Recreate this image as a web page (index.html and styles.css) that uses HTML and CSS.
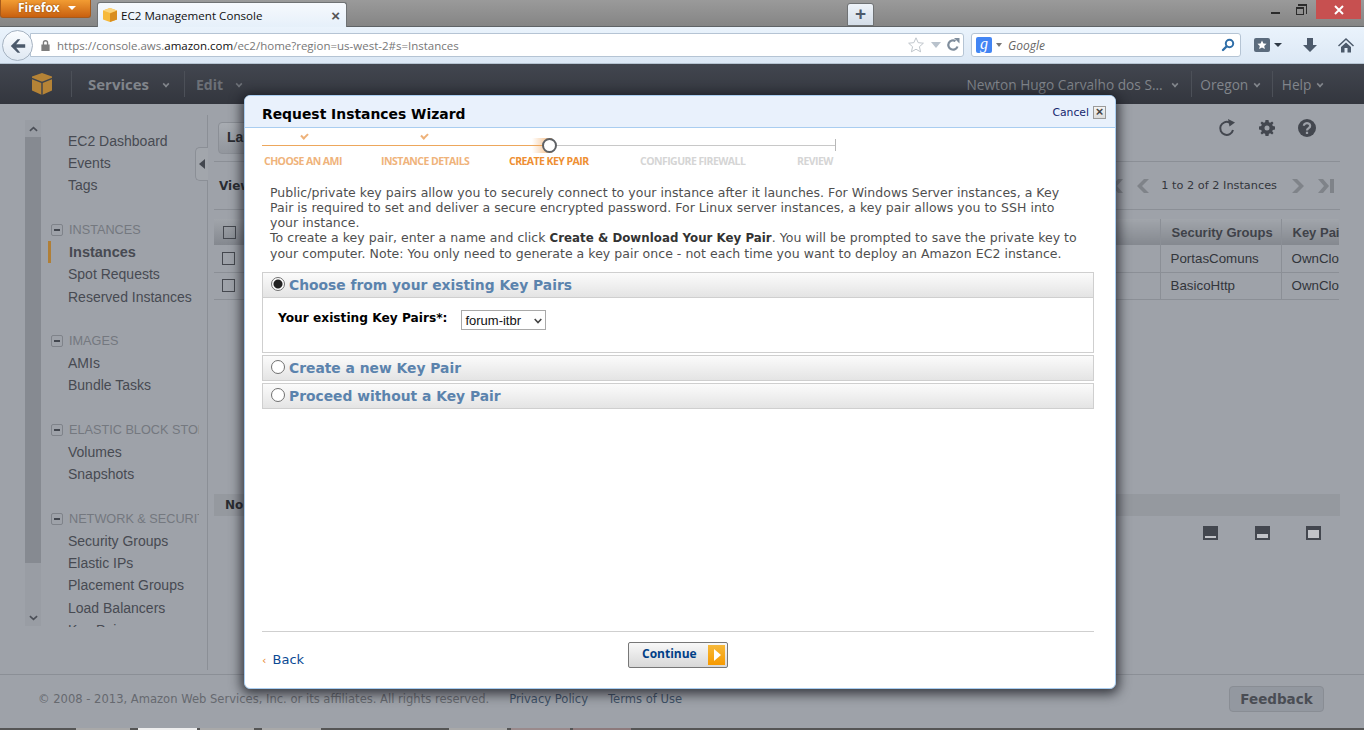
FILE: index.html
```html
<!DOCTYPE html>
<html>
<head>
<meta charset="UTF-8">
<title>EC2 Management Console</title>
<link rel="stylesheet" href="styles.css">
</head>
<body>

<div class="tabbar">
  <div class="ffbutton">Firefox <span class="ffcaret"></span></div>
  <div class="tab">
    <svg class="tabicon" viewBox="0 0 16 16"><path fill="#f6b93b" d="M8 1l7 2.500v9L8 15l-7-2.500v-9z"/><path fill="#d98e1f" d="M8 6.500V15l7-2.500v-9z"/><path fill="#fbd47c" d="M1 3.500L8 1l7 2.500L8 6z"/></svg>
    <span class="tabtitle">EC2 Management Console</span>
    <span class="tabclose">×</span>
  </div>
  <div class="newtab">+</div>
  <div class="wincontrols">
    <span class="winmin"></span>
    <span class="winmax"></span>
    <span class="winclose">
      <svg viewBox="0 0 10 10"><path stroke="#fff" stroke-width="2" d="M1 1l8 8M9 1l-8 8"/></svg>
    </span>
  </div>
</div>

<div class="navbar">
  <div class="backbtn">
    <svg viewBox="0 0 20 20"><path fill="#4c5a6b" d="M9.500 2.500l3 0-4.500 5.500h10v4H8l4.500 5.500h-3L2 10z"/></svg>
  </div>
  <div class="urlbar">
    <svg class="lock" viewBox="0 0 12 14"><path fill="#7d7d7d" d="M3 6V4a3 3 0 0 1 6 0v2h1.500v7h-9V6zm1.500 0h3V4a1.500 1.500 0 0 0-3 0z"/></svg>
    <span class="url">https://console.aws.<b>amazon.com</b>/ec2/home?region=us-west-2#s=Instances</span>
    <svg class="star" viewBox="0 0 20 20"><path fill="#fff" stroke="#b9bfc6" d="M10 2l2.400 5.400 5.800.6-4.400 3.900 1.300 5.700L10 14.700l-5.100 2.900 1.300-5.700L1.800 8l5.800-.6z"/></svg>
    <span class="urlcaret"></span>
    <svg class="reload" viewBox="0 0 14 14"><path fill="none" stroke="#7f8d9c" stroke-width="2.200" d="M11.500 8.500A4.700 4.700 0 1 1 9.500 3"/><path fill="#7f8d9c" d="M8 0h5.500v5.500z"/></svg>
  </div>
  <div class="searchbar">
    <span class="gbox">g</span>
    <span class="gcaret"></span>
    <span class="gtext">Google</span>
    <svg class="glass" viewBox="0 0 14 14"><circle cx="8.500" cy="5.500" r="3.700" fill="none" stroke="#2f6ea8" stroke-width="2"/><path stroke="#2f6ea8" stroke-width="2.400" stroke-linecap="round" d="M5.500 8.500L2 12"/></svg>
  </div>
  <div class="navicons">
    <svg class="bookmarks" viewBox="0 0 16 16"><rect width="16" height="14" y="1" rx="2" fill="#5b6b7d"/><path fill="#fff" d="M8 3.500l1.400 3 3.200.3-2.400 2.100.7 3.100L8 10.400 5.100 12l.7-3.100-2.400-2.100 3.200-.3z"/></svg>
    <span class="bmcaret"></span>
    <svg class="download" viewBox="0 0 16 16"><path fill="#4c5a6b" d="M5 1h6v7h4l-7 7-7-7h4z"/></svg>
    <svg class="home" viewBox="0 0 16 16"><path fill="#4c5a6b" d="M8 1l8 7.500-1 1L8 3 1 9.500l-1-1zM3 10l5-4.500 5 4.500v5.500H9.500V11h-3v4.500H3z"/></svg>
  </div>
</div>

<div class="awsnav">
  <div class="awslogo">
    <svg viewBox="0 0 20 22"><path fill="#b58336" d="M10 0l10 3.500v14L10 22 0 17.500v-14z"/><path fill="#3e434c" d="M9.300 8.500h1.400V22H9.300zM0 4.700l10 4 10-4v1.500l-10 4-10-4z"/></svg>
  </div>
  <div class="navitem navbold">Services <span class="navcaret"></span></div>
  <div class="navitem navedit">Edit <span class="navcaret"></span></div>
  <div class="navright">
    <div class="navitem navname">Newton Hugo Carvalho dos S... <span class="navcaret"></span></div>
    <div class="navitem navregion">Oregon <span class="navcaret"></span></div>
    <div class="navitem navhelp">Help <span class="navcaret"></span></div>
  </div>
</div>

<div class="console">
  <div class="columns">
    <div class="scroller">
      <div class="scrollbtn">
        <svg viewBox="0 0 10 6"><path fill="none" stroke="#4b4f57" stroke-width="1.800" d="M1 5l4-3.500L9 5"/></svg>
      </div>
      <div class="scrollthumb"></div>
      <div class="scrollbtn scrolldown">
        <svg viewBox="0 0 10 6"><path fill="none" stroke="#4b4f57" stroke-width="1.800" d="M1 1l4 3.500L9 1"/></svg>
      </div>
    </div>

    <div class="sidebar">
      <div class="sidescroll">
        <ul class="sidelist">
          <li>EC2 Dashboard</li>
          <li>Events</li>
          <li>Tags</li>
        </ul>
        <div class="sidehead"><span class="minus"></span>INSTANCES</div>
        <ul class="sidelist">
          <li class="current">Instances</li>
          <li>Spot Requests</li>
          <li>Reserved Instances</li>
        </ul>
        <div class="sidehead"><span class="minus"></span>IMAGES</div>
        <ul class="sidelist">
          <li>AMIs</li>
          <li>Bundle Tasks</li>
        </ul>
        <div class="sidehead"><span class="minus"></span>ELASTIC BLOCK STORE</div>
        <ul class="sidelist">
          <li>Volumes</li>
          <li>Snapshots</li>
        </ul>
        <div class="sidehead"><span class="minus"></span>NETWORK &amp; SECURITY</div>
        <ul class="sidelist">
          <li>Security Groups</li>
          <li>Elastic IPs</li>
          <li>Placement Groups</li>
          <li>Load Balancers</li>
          <li>Key Pairs</li>
        </ul>
      </div>
      <div class="collapse">
        <svg viewBox="0 0 6 10"><path fill="#43474f" d="M6 0v10L0 5z"/></svg>
      </div>
    </div>

    <div class="main">
      <div class="toolbar">
        <div class="launch">Launch Instance</div>
        <div class="tools">
          <svg viewBox="0 0 18 18"><path fill="none" stroke="#43474f" stroke-width="2" d="M15 11a6.500 6.500 0 1 1-3.500-7.500"/><path fill="#43474f" d="M10 0l7 3.500-5.500 4z"/></svg>
          <svg class="gear" viewBox="0 0 16 16"><path fill="#43474f" fill-rule="evenodd" d="M6.500 0h3l.4 2.200 1.300.6L13.100 1.500l1.400 1.400-1.300 1.900.6 1.300 2.200.4v3l-2.200.4-.6 1.300 1.300 1.900-1.400 1.400-1.900-1.300-1.300.6-.4 2.200h-3l-.4-2.200-1.300-.6-1.900 1.300-1.400-1.400 1.300-1.900-.6-1.300L0 9.500v-3l2.200-.4.6-1.300-1.300-1.900 1.400-1.400 1.900 1.300 1.300-.6zM8 5.500a2.500 2.500 0 1 0 0 5 2.500 2.500 0 0 0 0-5z"/></svg>
          <svg viewBox="0 0 16 16"><circle cx="8" cy="8" r="8" fill="#43474f"/><path fill="none" stroke="#9ea2a9" stroke-width="2" d="M5.200 6a2.800 2.400 0 1 1 4.300 2.100C8.500 8.800 8 9.200 8 10.300"/><rect x="7" y="11.300" width="2" height="2" fill="#9ea2a9"/></svg>
        </div>
      </div>
      <div class="filterrow">
        <span class="viewing">Viewing:</span>
        <div class="pager">
          <svg class="pagefirst" viewBox="0 0 16 14"><path fill="#7f8389" d="M16 0h-5L5 7l6 7h5l-6-7zM0 0h4v14H0z"/></svg>
          <svg viewBox="0 0 12 14"><path fill="#7f8389" d="M7 0h5L5 7l7 7H7L0 7z"/></svg>
          <span>1 to 2 of 2 Instances</span>
          <svg viewBox="0 0 12 14"><path fill="#7f8389" d="M5 0H0l7 7-7 7h5l7-7z"/></svg>
          <svg class="pagelast" viewBox="0 0 16 14"><path fill="#7f8389" d="M0 0h5l6 7-6 7H0l6-7zM12 0h4v14h-4z"/></svg>
        </div>
      </div>
      <table class="instances">
        <tr>
          <th class="colcheck"><span class="check"></span></th>
          <th class="colfill">Name</th>
          <th class="colsec">Security Groups</th>
          <th class="colkey">Key Pair Name</th>
        </tr>
        <tr>
          <td class="colcheck"><span class="check"></span></td>
          <td class="colfill">&nbsp;</td>
          <td class="colsec">PortasComuns</td>
          <td class="colkey">OwnCloud</td>
        </tr>
        <tr>
          <td class="colcheck"><span class="check"></span></td>
          <td class="colfill">&nbsp;</td>
          <td class="colsec">BasicoHttp</td>
          <td class="colkey">OwnCloud</td>
        </tr>
      </table>
      <div class="nobar">No</div>
      <div class="paneicons">
        <svg viewBox="0 0 15 14"><path fill="#43474f" d="M0 0h15v14H0z"/><path fill="#c2c4c9" d="M2 10h11v2H2z"/></svg>
        <svg viewBox="0 0 15 14"><path fill="#43474f" d="M0 0h15v14H0z"/><path fill="#c2c4c9" d="M2 8h11v4H2z"/></svg>
        <svg viewBox="0 0 15 14"><path fill="#43474f" d="M0 0h15v14H0z"/><path fill="#c2c4c9" d="M2 4h11v8H2z"/></svg>
      </div>
    </div>
  </div>

  <div class="footer">
    <span class="copy">© 2008 - 2013, Amazon Web Services, Inc. or its affiliates. All rights reserved.</span>
    <span class="footlink">Privacy Policy</span>
    <span class="footlink">Terms of Use</span>
    <span class="feedback">Feedback</span>
  </div>
</div>
<div class="taskstrip">
  <span class="tb1"></span><span class="tb2"></span><span class="tb3"></span><span class="tb4"></span>
  <span class="tb5"></span><span class="tb6"></span><span class="tb7"></span>
</div>

<div class="wizard">
  <div class="wizhead">
    <h1>Request Instances Wizard</h1>
    <span class="cancel">Cancel</span>
    <span class="cancelx">×</span>
  </div>

  <div class="steps">
    <div class="stepline">
      <span class="linedone"></span><span class="linetodo"></span>
      <span class="tick tick1"></span>
      <span class="tick tick2"></span>
      <span class="glow"></span>
      <span class="knob"></span>
    </div>
    <div class="steplabels">
      <span class="lab1">CHOOSE AN AMI</span>
      <span class="lab2">INSTANCE DETAILS</span>
      <span class="lab3">CREATE KEY PAIR</span>
      <span class="lab4">CONFIGURE FIREWALL</span>
      <span class="lab5">REVIEW</span>
    </div>
  </div>

  <div class="intro">
    Public/private key pairs allow you to securely connect to your instance after it launches. For Windows Server instances, a Key Pair is required to set and deliver a secure encrypted password. For Linux server instances, a key pair allows you to SSH into your instance.<br>
    To create a key pair, enter a name and click <b>Create &amp; Download Your Key Pair</b>. You will be prompted to save the private key to your computer. Note: You only need to generate a key pair once - not each time you want to deploy an Amazon EC2 instance.
  </div>

  <div class="option open">
    <div class="opthead"><span class="radio checked"></span>Choose from your existing Key Pairs</div>
    <div class="optbody">
      <label>Your existing Key Pairs*:</label>
      <div class="select">forum-itbr
        <svg viewBox="0 0 8 6"><path fill="none" stroke="#444" stroke-width="1.600" d="M.7 1L4 4.500 7.300 1"/></svg>
      </div>
    </div>
  </div>
  <div class="option">
    <div class="opthead"><span class="radio"></span>Create a new Key Pair</div>
  </div>
  <div class="option">
    <div class="opthead"><span class="radio"></span>Proceed without a Key Pair</div>
  </div>

  <div class="wizfoot">
    <span class="back"><i>‹</i> Back</span>
    <div class="continue">Continue
      <span class="contarrow"></span>
    </div>
  </div>
</div>

</body>
</html>
```

FILE: styles.css
```css
*{
box-sizing: border-box;
margin:0; padding:0;
}

html,body{
width: 1364px; height: 730px;
overflow: hidden;
}

body{
position: relative;
background: #9ea2a9;
font-family: "Liberation Sans", Arial, sans-serif;
}

/*--------- browser tabs ---------*/
.tabbar{
height: 27px;
display: flex;
align-items: flex-start;
background: linear-gradient(#9a9a9a, #858585);
border-bottom: 1px solid #5f6366;
}

.ffbutton{
width: 91px; height: 18px;
background: linear-gradient(#f29c33, #c8600f);
border: 1px solid #a65a1c;
border-top: none;
border-radius: 0 0 3px 3px;
color: #fff;
font: bold 12px "Open Sans", sans-serif;
text-shadow: 0 0 2px #7a3c00;
padding-left: 17px;
line-height: 16px;
}

.ffcaret{
display: inline-block;
border: 4px solid transparent;
border-top: 4px solid #fff;
border-bottom: none;
margin: 0 0 2px 5px;
}

.tab{
width: 250px; height: 25px;
margin: 2px 0 0 6px;
background: linear-gradient(#f6f9fd, #e6f0fa);
border: 1px solid #6f7274;
border-bottom: none;
border-radius: 3px 3px 0 0;
display: flex;
align-items: center;
padding-left: 4px;
}

.tabicon{
width: 16px; height: 16px;
}

.tabtitle{
font: 11.600px "Open Sans", sans-serif;
color: #111;
margin-left: 3px;
flex: 1;
}

.tabclose{
font: bold 15px "Liberation Sans", sans-serif;
color: #555;
margin-right: 6px;
}

.newtab{
width: 27px; height: 23px;
margin: 3px 0 0 500px;
background: linear-gradient(#eef3f9, #d3dde8);
border: 1px solid #6f7274;
border-radius: 3px 3px 0 0;
color: #4c5a6b;
font: bold 19px/20px "Liberation Sans", sans-serif;
text-align: center;
}

.wincontrols{
margin-left: auto;
display: flex;
align-items: flex-start;
}

.winmin{
width: 9px; height: 2px;
background: #2b2b2b;
margin: 12px 0 0 0;
}

.winmax{
width: 8px; height: 8px;
border: 1px solid #2b2b2b;
border-top-width: 2px;
margin: 7px 2px 0 16px;
position: relative;
}

.winmax::before{
content: "";
position: absolute;
left: 1px; top: -5px;
width: 8px; height: 8px;
border: 1px solid #2b2b2b;
border-top-width: 2px;
border-left: none;
border-bottom: none;
}

.winclose{
width: 45px; height: 19px;
margin: 0 3px 0 10px;
background: #c75050;
display: flex;
align-items: center;
justify-content: center;
}

.winclose svg{
width: 10px; height: 10px;
}

/*--------- browser nav ---------*/
.navbar{
height: 37px;
display: flex;
align-items: center;
background: linear-gradient(#eaf3fc, #dce8f5);
border-bottom: 1px solid #b6c4d2;
position: relative;
padding-left: 30px;
}

.backbtn{
position: absolute;
left: 2px; top: 3px;
width: 31px; height: 31px;
border-radius: 50%;
background: linear-gradient(#fbfdff, #dfe8f2);
border: 1px solid #a5b2c1;
display: flex;
align-items: center;
justify-content: center;
z-index: 1;
}

.backbtn svg{
width: 18px; height: 18px;
}

.urlbar{
width: 934px; height: 24px;
background: #fff;
border: 1px solid #b5c4d4;
border-radius: 0 3px 3px 0;
display: flex;
align-items: center;
padding-left: 9px;
}

.lock{
width: 11px; height: 13px;
}

.url{
font: 11.500px "Open Sans", sans-serif;
color: #777;
margin-left: 6px;
flex: 1;
}

.url b{
font-weight: normal;
color: #111;
}

.star{
width: 18px; height: 18px;
}

.urlcaret{
border: 5px solid transparent;
border-top: 6px solid #b9c2cc;
border-bottom: none;
margin: 0 5px 0 6px;
}

.reload{
width: 14px; height: 14px;
margin-right: 3px;
}

.searchbar{
width: 270px; height: 24px;
margin-left: 7px;
background: #fff;
border: 1px solid #b5c4d4;
border-radius: 3px;
display: flex;
align-items: center;
padding-left: 4px;
}

.gbox{
width: 16px; height: 16px;
background: #4285f4;
color: #fff;
border-radius: 2px;
font: italic 16px/14px "Liberation Serif", serif;
text-align: center;
}

.gcaret{
border: 3px solid transparent;
border-top: 4px solid #777;
border-bottom: none;
margin-left: 4px;
}

.gtext{
font: italic 12px "Open Sans", sans-serif;
color: #666;
margin-left: 6px;
flex: 1;
}

.glass{
width: 14px; height: 14px;
margin-right: 5px;
}

.navicons{
display: flex;
align-items: center;
margin-left: 13px;
}

.bookmarks{
width: 16px; height: 16px;
}

.bmcaret{
border: 4px solid transparent;
border-top: 4px solid #2f3a46;
border-bottom: none;
margin-left: 4px;
}

.download{
width: 16px; height: 16px;
margin-left: 20px;
}

.home{
width: 16px; height: 16px;
margin-left: 20px;
}

/*--------- aws nav ---------*/
.awsnav{
height: 40px;
display: flex;
align-items: center;
background: linear-gradient(#42464f, #33363e);
color: #81858b;
font: 13.700px "Open Sans", sans-serif;
}

.awslogo{
width: 72px; height: 26px;
padding-left: 32px;
border-right: 1px solid #4c5058;
}

.awslogo svg{
width: 20px; height: 22px;
margin-top: 2px;
}

.navitem{
height: 26px;
line-height: 27px;
white-space: nowrap;
}

.navbold{
font-weight: bold;
font-size: 15px;
padding: 0 15px 0 16px;
border-right: 1px solid #4c5058;
}

.navedit{
font-weight: bold;
font-size: 14px;
color: #6c7077;
padding-left: 11px;
}

.navcaret{
display: inline-block;
width: 6px; height: 6px;
border-right: 2px solid currentColor;
border-bottom: 2px solid currentColor;
transform: rotate(45deg) scale(.8);
margin: 0 0 3px 6px;
}

.navbold .navcaret{ margin-left: 10px; }
.navedit .navcaret{ margin-left: 9px; }
.navname .navcaret{ margin-left: 6px; }
.navregion .navcaret,.navhelp .navcaret{ margin-left: 2px; }

.navright{
margin-left: auto;
display: flex;
margin-right: 41px;
}

.navname{
padding-right: 13px;
border-right: 1px solid #4c5058;
}

.navregion{
padding: 0 12px 0 8px;
border-right: 1px solid #4c5058;
}

.navhelp{
padding-left: 9px;
}

/*--------- console under the mask ---------*/
.console{
height: 624px;
display: flex;
flex-direction: column;
background: #9ea2a9;
}

.columns{
height: 570px;
display: flex;
}

.scroller{
width: 16px;
height: 506px;
margin: 16px 0 0 25px;
background: #999da4;
display: flex;
flex-direction: column;
}

.scrollbtn{
height: 17px;
display: flex;
align-items: center;
justify-content: center;
}

.scrollbtn svg{
width: 9px; height: 6px;
}

.scrollthumb{
height: 426px;
background: #868a91;
}

.scrolldown{
margin-top: auto;
}

.sidebar{
width: 167px;
height: 555px;
margin-top: 11px;
border-right: 1px solid #8b8f96;
position: relative;
color: #474a52;
}

.sidescroll{
height: 512px;
padding: 15px 8px 0 7px;
overflow: hidden;
}

.sidelist{
list-style: none;
margin-bottom: 23.500px;
}

.sidelist li{
font-size: 14px;
line-height: 22.200px;
padding-left: 20px;
white-space: nowrap;
}

.sidelist li.current{
font-weight: bold;
font-size: 14.500px;
border-left: 3px solid #b07f37;
padding-left: 18px;
}

.sidehead{
display: flex;
align-items: center;
font-size: 12.700px;
line-height: 20px;
color: #74787f;
white-space: nowrap;
overflow: hidden;
margin: 0 0 1px 0;
padding-left: 3px;
}

.minus{
flex: none;
width: 12px; height: 12px;
border: 1px solid #7f838a;
border-radius: 2px;
margin-right: 6px;
background: linear-gradient(#43474f, #43474f) center / 6px 2px no-repeat;
}

.collapse{
position: absolute;
right: -1px; top: 32px;
width: 13px; height: 34px;
background: #a2a6ac;
border: 1px solid #8b8f96;
border-right: none;
border-radius: 5px 0 0 5px;
display: flex;
align-items: center;
justify-content: center;
}

.collapse svg{
width: 6px; height: 10px;
}

.main{
flex: 1;
padding: 14px 24px 0 6px;
position: relative;
min-width: 0;
}

.toolbar{
height: 44px;
display: flex;
align-items: flex-start;
border-bottom: 1px solid #8b8f96;
}

.launch{
height: 32px;
margin: 4px 0 0 4px;
width: 140px;
padding-left: 8px;
background: linear-gradient(#a8acb2, #92969d);
border: 1px solid #8b8f96;
border-radius: 4px;
font: bold 14px/29px "Liberation Sans", sans-serif;
color: #2a2c31;
}

.tools{
margin-left: auto;
display: flex;
align-items: center;
gap: 23px;
margin: 1px 24px 0 auto;
}

.tools svg{
width: 18px; height: 18px;
}

.tools .gear{
width: 16px; height: 16px;
}

.filterrow{
height: 48px;
display: flex;
align-items: center;
border-bottom: 1px solid #8b8f96;
}

.viewing{
font: bold 12px "DejaVu Sans", sans-serif;
color: #2a2c31;
margin-left: 5px;
}

.pager{
margin-left: auto;
display: flex;
align-items: center;
font: 11.300px "DejaVu Sans", sans-serif;
color: #33363c;
margin-right: 6px;
}

.pager svg{
width: 12px; height: 14px;
flex: none;
}

.pager span{
margin: 0 15px 0 12px;
}

.pager .pagefirst{
width: 16px;
margin-right: 14px;
}

.pager .pagelast{
width: 16px;
margin-left: 14px;
}

.instances{
margin-top: 9px;
width: 1125px;
table-layout: fixed;
border-collapse: collapse;
font-size: 13.350px;
color: #32353b;
}

.instances th{
height: 26px;
text-align: left;
font-size: 13px;
font-weight: bold;
color: #3f4249;
background: linear-gradient(#a1a5ab, #84888f);
border-right: 1px solid #8b8f96;
padding-left: 11px;
white-space: nowrap;
overflow: hidden;
}

.instances td{
height: 27px;
border-bottom: 1px solid #8b8f96;
border-right: 1px solid #8b8f96;
padding-left: 10px;
white-space: nowrap;
overflow: hidden;
}

.colcheck{
width: 30px;
}

.colsec{
width: 121px;
}

.colkey{
width: 58px;
border-right: none !important;
}

.check{
display: block;
width: 13px; height: 13px;
border: 1px solid #45484f;
margin-left: -2px;
}

.nobar{
height: 22px;
margin-top: 194px;
background: #95999f;
font: bold 12px/22px "DejaVu Sans", sans-serif;
color: #2a2c31;
padding-left: 11px;
}

.paneicons{
display: flex;
justify-content: flex-end;
gap: 36.500px;
padding: 10px 19px 0 0;
}

.paneicons svg{
width: 15px; height: 14px;
}

/*--------- footer ---------*/
.footer{
flex: 1;
display: flex;
align-items: center;
border-top: 1px solid #8b8f96;
padding: 0 40px 6px 38px;
font: 11.560px "DejaVu Sans", sans-serif;
color: #66696f;
}

.footlink{
color: #3e5167;
margin-left: 20px;
}

.feedback{
margin-left: auto;
height: 26px;
width: 95px;
text-align: center;
background: #9398a0;
border: 1px solid #898d94;
border-radius: 4px;
font: bold 13.500px/24px "DejaVu Sans", sans-serif;
color: #4a4d54;
}

.taskstrip{
height: 2px;
background: #555;
display: flex;
}

.taskstrip span{
height: 2px;
background: #a9a9a9;
}

.tb1{ width: 54px; margin-left: 76px; }
.tb2{ width: 59px; margin-left: 8px; background: #eee !important; }
.tb3{ width: 54px; margin-left: 3px; }
.tb4{ width: 59px; margin-left: 8px; }
.tb5{ width: 58px; margin-left: 128px; }
.tb6{ width: 59px; margin-left: 4px; background: #9a8a8c !important; }
.tb7{ width: 58px; margin-left: 3px; background: #8d7a7c !important; }

/*--------- wizard ---------*/
.wizard{
position: absolute;
left: 244px; top: 95px;
width: 872px; height: 594px;
background: #fff;
border: 1px solid #a9cdf0;
border-radius: 6px;
box-shadow: 0 2px 12px 3px rgba(20,22,28,.75);
padding: 0 21px 0 17px;
display: flex;
flex-direction: column;
font-family: "DejaVu Sans", Verdana, sans-serif;
}

.wizhead{
height: 32px;
margin: 0 -21px 0 -17px;
padding: 0 9px 0 17px;
display: flex;
align-items: center;
background: #e9f1fc;
border-bottom: 1px solid #a9cdf0;
border-radius: 5px 5px 0 0;
}

.wizhead h1{
font-size: 13.900px;
color: #000;
margin-right: auto;
margin-top: 5px;
}

.cancel{
font-size: 10.800px;
color: #16276e;
margin: 2px 4px 0 0;
}

.cancelx{
width: 13px; height: 13px;
margin-top: 1px;
background: linear-gradient(#f4f4f4, #dcdcdc);
border: 1px solid #9a9a9a;
font: bold 13px/10px "Liberation Sans", sans-serif;
color: #444;
text-align: center;
}

.steps{
height: 44px;
}

.stepline{
position: relative;
height: 25px;
}

.linedone{
position: absolute;
left: 0; top: 17px;
width: 285px; height: 1px;
background: #eda75c;
}

.linetodo{
position: absolute;
left: 285px; top: 17px;
width: 289px; height: 1px;
background: #c8c8c8;
}

.linetodo::after{
content: "";
position: absolute;
right: 0; top: -6px;
width: 1px; height: 12px;
background: #b8b8b8;
}

.tick{
position: absolute;
top: 5px;
width: 7px; height: 5px;
border-left: 2px solid #eeb27a;
border-bottom: 2px solid #eeb27a;
transform: rotate(-45deg);
}

.tick1{ left: 39px; }
.tick2{ left: 159px; }

.glow{
position: absolute;
left: 270px; top: 10px;
width: 20px; height: 15px;
background: linear-gradient(90deg, rgba(240,160,80,0), rgba(240,160,80,.75));
}

.knob{
position: absolute;
left: 280px; top: 10px;
width: 15px; height: 15px;
border-radius: 50%;
background: #fff;
border: 2px solid #5f6266;
}

.steplabels{
position: relative;
height: 19px;
font: bold 10.500px/17px "Open Sans", sans-serif;
letter-spacing: -.55px;
white-space: nowrap;
}

.steplabels span{
position: absolute;
top: 0;
}

.lab1{ left: 2px; color: #efb37b; }
.lab2{ left: 119px; color: #efb37b; }
.lab3{ left: 247px; color: #ee8f33; }
.lab4{ left: 378px; color: #d5d5d5; }
.lab5{ left: 535px; color: #d5d5d5; }

.intro{
margin: 13px 0 0 8px;
width: 810px;
font-size: 12.500px;
letter-spacing: .03px;
line-height: 15px;
color: #4f4f4f;
height: 72px;
}

.intro b{
font-size: 11.800px;
color: #333;
}

.option{
border: 1px solid #cfcfcf;
margin-bottom: 2px;
}

.option.open{
margin-top: 15px;
}

.opthead{
height: 24px;
display: flex;
align-items: center;
background: linear-gradient(#fbfbfb, #e4e4e4);
font-size: 13.850px;
font-weight: bold;
color: #5b83ad;
padding-left: 8px;
}

.radio{
width: 14px; height: 14px;
border: 1px solid #707070;
border-radius: 50%;
background: #fff;
margin-right: 4px;
margin-top: -3px;
}

.radio.checked{
background: radial-gradient(circle, #222 0 4px, #fff 5px);
}

.optbody{
height: 55px;
border-top: 1px solid #cfcfcf;
display: flex;
align-items: flex-start;
padding: 12px 0 0 15px;
}

.optbody label{
font-size: 12.200px;
font-weight: bold;
color: #000;
margin: 1px 14px 0 0;
}

.select{
width: 85px; height: 20px;
border: 1px solid #a9a9a9;
font: 13px/19px "Liberation Sans", sans-serif;
color: #111;
padding-left: 3px;
position: relative;
}

.select svg{
position: absolute;
right: 3px; top: 7px;
width: 8px; height: 6px;
}

.wizfoot{
margin-top: auto;
height: 57px;
border-top: 1px solid #cfcfcf;
display: flex;
align-items: flex-start;
position: relative;
}

.back{
font-size: 13px;
color: #0b4a94;
margin-top: 20px;
}

.back i{
color: #e8892f;
font-style: normal;
font-size: 11px;
margin-right: 2px;
}

.continue{
position: absolute;
left: 366px; top: 10px;
width: 100px; height: 26px;
border: 1px solid #777;
border-radius: 2px;
background: linear-gradient(#f8f8f8, #d8d8d8);
font: bold 12px/22px "Open Sans", sans-serif;
color: #003f87;
padding-left: 13px;
}

.contarrow{
position: absolute;
right: 2px; top: 2px;
width: 17px; height: 20px;
background: linear-gradient(#f6b93b, #f79a00);
}

.contarrow::after{
content: "";
position: absolute;
left: 6px; top: 4px;
border: 6px solid transparent;
border-left: 7px solid #fff;
border-right: none;
}
```
